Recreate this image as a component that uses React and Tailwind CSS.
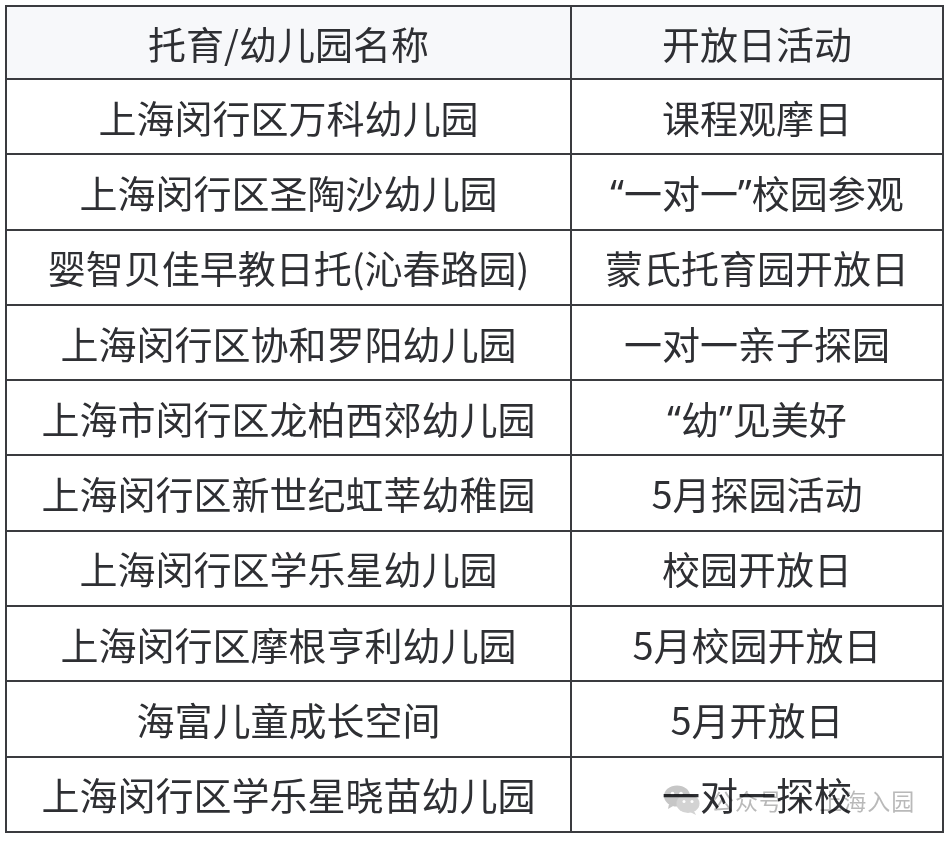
import React from "react";

const Q = ({ children }) => (
  <span style={{ fontFamily: '"Noto Sans", "Liberation Sans", sans-serif' }}>{children}</span>
);

const rows = [
  ["上海闵行区万科幼儿园", "课程观摩日"],
  ["上海闵行区圣陶沙幼儿园", <><Q>“</Q>一对一<Q>”</Q>校园参观</>],
  ["婴智贝佳早教日托(沁春路园)", "蒙氏托育园开放日"],
  ["上海闵行区协和罗阳幼儿园", "一对一亲子探园"],
  ["上海市闵行区龙柏西郊幼儿园", <><Q>“</Q>幼<Q>”</Q>见美好</>],
  ["上海闵行区新世纪虹莘幼稚园", "5月探园活动"],
  ["上海闵行区学乐星幼儿园", "校园开放日"],
  ["上海闵行区摩根亨利幼儿园", "5月校园开放日"],
  ["海富儿童成长空间", "5月开放日"],
  ["上海闵行区学乐星晓苗幼儿园", "一对一探校"],
];

function WeChatIcon() {
  return (
    <svg width="38" height="32" viewBox="0 0 38 32" className="block">
      <ellipse cx="14" cy="12" rx="13" ry="10.5" fill="#b8b8b8" />
      <path d="M6 20 L5 25 L11 21.5 Z" fill="#b8b8b8" />
      <ellipse cx="25" cy="19.5" rx="11.5" ry="9.5" fill="#c8c8c8" />
      <path d="M31 27 L33 31 L27 28 Z" fill="#c8c8c8" />
      <circle cx="9.5" cy="9.5" r="1.8" fill="#fff" />
      <circle cx="18" cy="9.5" r="1.8" fill="#fff" />
      <circle cx="21" cy="17.5" r="1.5" fill="#fff" />
      <circle cx="29" cy="17.5" r="1.5" fill="#fff" />
    </svg>
  );
}

export default function App() {
  return (
    <div
      className="w-[950px] h-[841px] bg-white pt-[5px] pl-[5px] text-[#2e2f33]"
      style={{ fontFamily: '"PingFang SC", "Noto Sans CJK SC", "Noto Sans", sans-serif' }}
    >
      <div className="relative w-[939px] border-2 border-[#3a3b3f] grid grid-cols-[565px_1fr]">
        <div className="h-[73px] bg-[#f7f8fa] border-r-2 border-b-2 border-[#3a3b3f] flex items-center justify-center text-[38px] leading-none">托育/幼儿园名称</div>
        <div className="h-[73px] bg-[#f7f8fa] border-b-2 border-[#3a3b3f] flex items-center justify-center text-[38px] leading-none">开放日活动</div>
        {rows.map(([a, b], i) => {
          const last = i === rows.length - 1;
          return (
            <React.Fragment key={i}>
              <div className={`border-r-2 border-[#3a3b3f] flex items-center justify-center text-[38px] leading-none ${last ? "h-[73.3px]" : "h-[75.3px] border-b-2"}`}>{a}</div>
              <div className={`border-[#3a3b3f] flex items-center justify-center text-[38px] leading-none ${last ? "h-[73.3px]" : "h-[75.3px] border-b-2"}`}>{b}</div>
            </React.Fragment>
          );
        })}
        <div className="absolute left-[656px] top-[777px] flex items-center gap-[10px] opacity-80 mix-blend-multiply pointer-events-none">
          <WeChatIcon />
          <span className="text-[23px] leading-none text-[#a8a8a8] tracking-[1px]">公众号 · 上海入园</span>
        </div>
      </div>
    </div>
  );
}
